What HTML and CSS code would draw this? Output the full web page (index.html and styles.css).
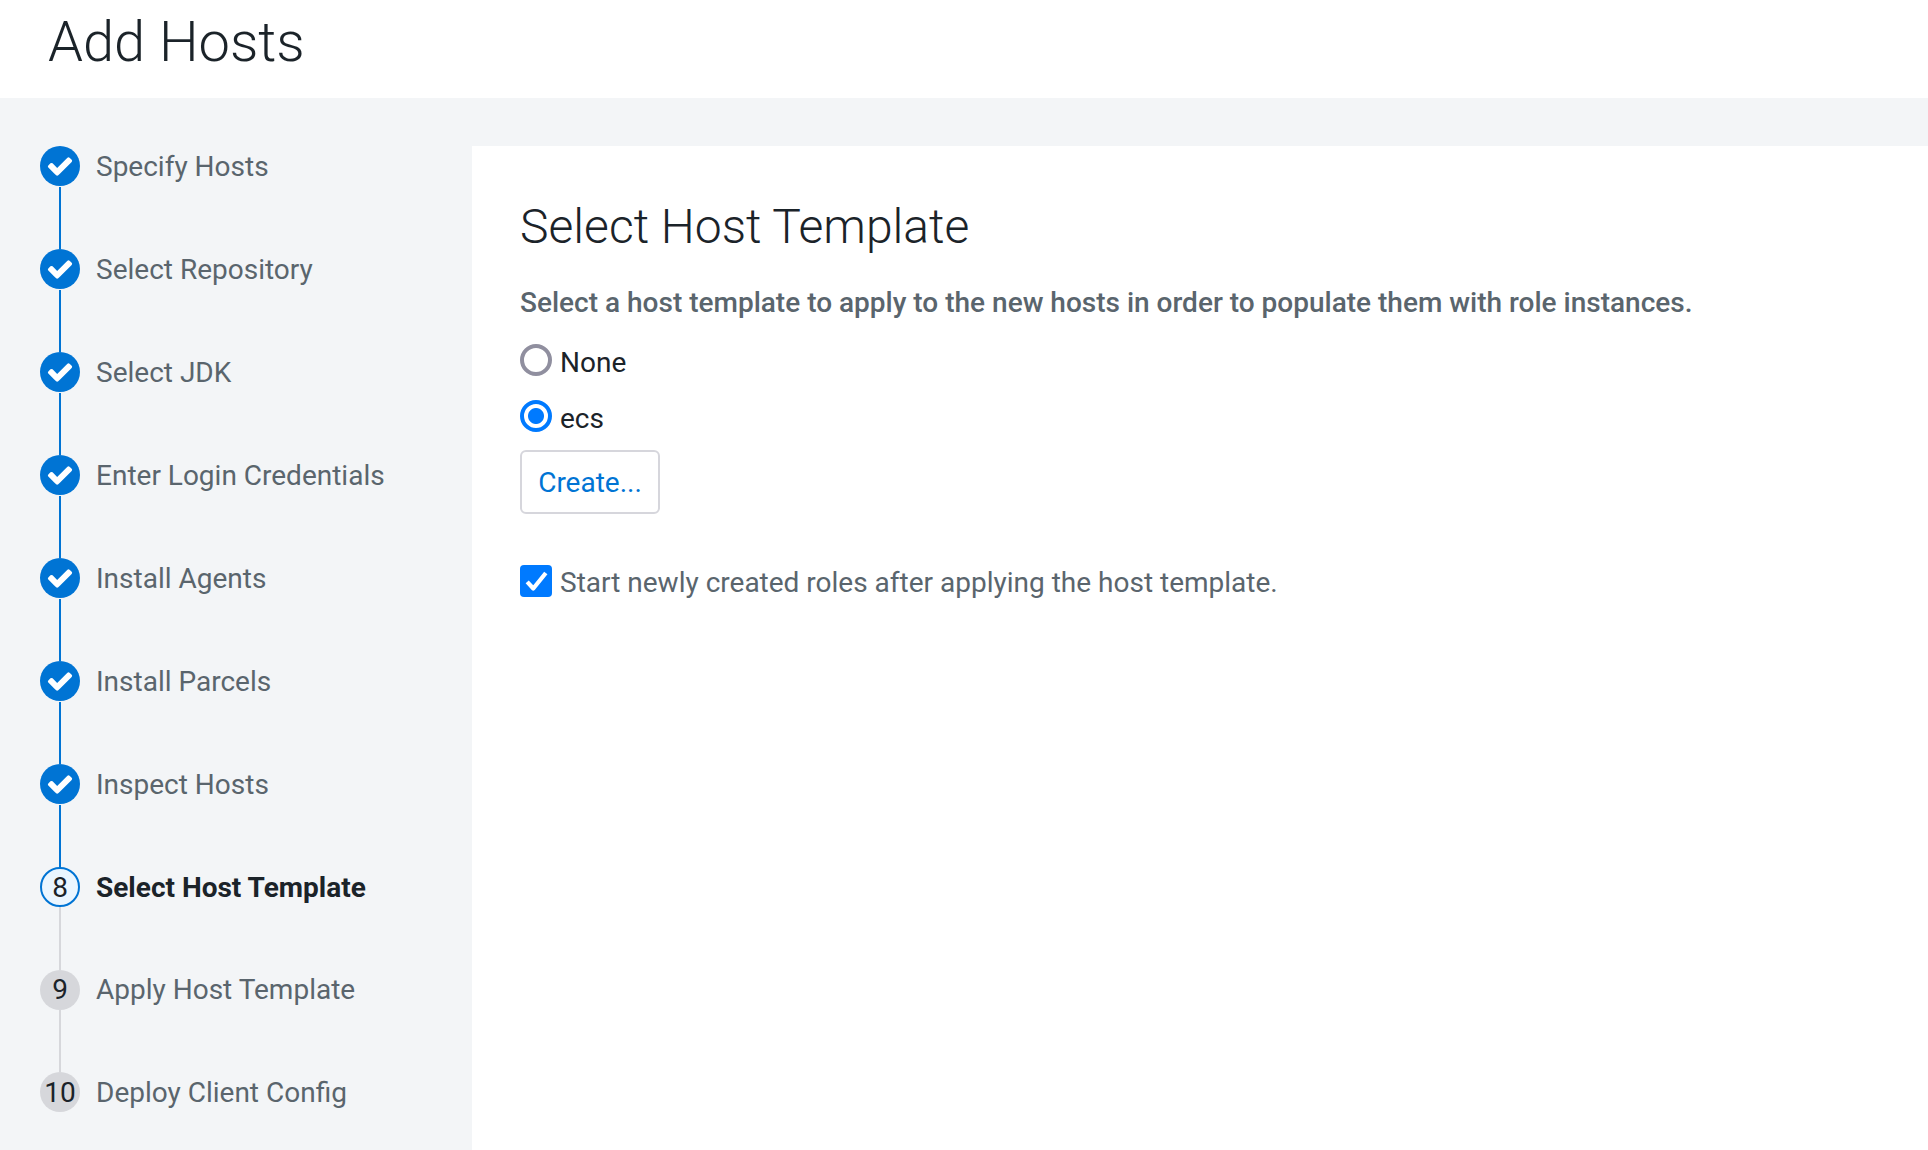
FILE: index.html
```html
<!DOCTYPE html>
<html lang="en">
<head>
<meta charset="utf-8">
<title>Add Hosts</title>
<link rel="stylesheet" href="styles.css">
</head>
<body>
<svg class="sprite" aria-hidden="true">
  <symbol id="check" viewBox="0 0 1792 1792"><path fill="currentColor" d="M1671 566q0 40-28 68l-724 724-136 136q-28 28-68 28t-68-28l-136-136-362-362q-28-28-28-68t28-68l136-136q28-28 68-28t68 28l294 295 656-657q28-28 68-28t68 28l136 136q28 28 28 68z"/></symbol>
</svg>
<header class="header"><h1 class="page-title">Add Hosts</h1></header>
<div class="layout">
  <ol class="steps">
    <li class="step done"><span class="marker"><svg class="tick"><use href="#check"/></svg></span><span class="label">Specify Hosts</span></li>
    <li class="step done"><span class="marker"><svg class="tick"><use href="#check"/></svg></span><span class="label">Select Repository</span></li>
    <li class="step done"><span class="marker"><svg class="tick"><use href="#check"/></svg></span><span class="label">Select JDK</span></li>
    <li class="step done"><span class="marker"><svg class="tick"><use href="#check"/></svg></span><span class="label">Enter Login Credentials</span></li>
    <li class="step done"><span class="marker"><svg class="tick"><use href="#check"/></svg></span><span class="label">Install Agents</span></li>
    <li class="step done"><span class="marker"><svg class="tick"><use href="#check"/></svg></span><span class="label">Install Parcels</span></li>
    <li class="step done"><span class="marker"><svg class="tick"><use href="#check"/></svg></span><span class="label">Inspect Hosts</span></li>
    <li class="step current"><span class="marker">8</span><span class="label">Select Host Template</span></li>
    <li class="step"><span class="marker">9</span><span class="label">Apply Host Template</span></li>
    <li class="step"><span class="marker">10</span><span class="label">Deploy Client Config</span></li>
  </ol>
  <main class="panel">
    <h2 class="panel-title">Select Host Template</h2>
    <p class="lead">Select a host template to apply to the new hosts in order to populate them with role instances.</p>
    <label class="option"><input class="radio" type="radio" name="template"><span class="option-text">None</span></label>
    <label class="option"><input class="radio" type="radio" name="template" checked><span class="option-text">ecs</span></label>
    <button class="button" type="button">Create...</button>
    <div class="start-roles">
      <span class="checkbox" role="checkbox" aria-checked="true"><svg class="checkbox-tick" viewBox="0 0 32 32"><path d="M7.200 16.800l6.100 6.700L25.800 8" fill="none" stroke="currentColor" stroke-width="4.200" stroke-linejoin="round"/></svg></span>
      <span class="option-text">Start newly created roles after applying the host template.</span>
    </div>
  </main>
</div>
</body>
</html>
```
FILE: styles.css
```css
* { box-sizing: border-box; }
body {
  margin: 0;
  height: 1150px;
  overflow: hidden;
  display: flex;
  flex-direction: column;
  background: #fff;
  color: #1b2329;
  font: 28px/40px Roboto, sans-serif;
}
.sprite { display: none; }
.header { height: 98px; padding: 2px 48px 0; flex: none; }
.page-title { margin: 0; font-size: 56px; line-height: 80px; font-weight: 300; }
.layout {
  flex: 1;
  min-height: 0;
  display: flex;
  padding-top: 48px;
  background: #f3f5f7;
}
.steps {
  flex: none;
  width: 472px;
  margin: 0;
  padding: 0 0 0 40px;
  list-style: none;
}
.step {
  position: relative;
  display: flex;
  gap: 16px;
  height: 103px;
  color: #5a656d;
}
.step::after {
  content: "";
  position: absolute;
  left: 19px;
  top: 40px;
  bottom: 0;
  width: 2px;
  background: #d6d7db;
}
.step:last-child::after { display: none; }
.step.done::after { top: 41px; background: #0074d4; }
.marker {
  width: 40px;
  height: 40px;
  padding-top: 2px;
  border-radius: 50%;
  display: flex;
  align-items: center;
  justify-content: center;
  background: #d6d7db;
  color: #1b2329;
}
.label { padding-top: 1px; }
.done .marker { padding-top: 0; background: #0074d4; color: #fff; }
.current .marker { background: #ebf6ff; border: 2px solid #0074d4; }
.current .label { color: #1b2329; font-weight: 700; }
.step:nth-last-child(2) { height: 102px; }
.step:nth-last-child(2) .marker,
.step:nth-last-child(2) .label { padding-top: 0; }
.tick { width: 28px; height: 28px; }
.panel { flex: 1; padding: 51px 48px 0; background: #fff; }
.panel-title { margin: 0; font-size: 48px; line-height: 60px; font-weight: 300; }
.lead { margin: 26px 0 20px; color: #5a656d; font-weight: 500; }
.option { display: flex; gap: 8px; height: 56px; }
.radio {
  appearance: none;
  width: 32px;
  height: 32px;
  margin: 1px 0 0;
  border: 4px solid #908f9f;
  border-radius: 50%;
}
.radio:checked {
  border-color: #007aff;
  background: radial-gradient(circle, #007aff 7.500px, #fff 8.500px);
}
.option-text { line-height: 40px; }
.button {
  display: block;
  height: 64px;
  width: 140px;
  margin-top: -5px;
  padding: 2px 0 0;
  border: 2px solid #d6d6dc;
  border-radius: 6px;
  background: #fff;
  color: #0074d4;
  font: inherit;
}
.start-roles { display: flex; gap: 8px; margin-top: 49px; color: #5a656d; }
.checkbox {
  display: flex;
  width: 32px;
  height: 32px;
  margin-top: 2px;
  border-radius: 4px;
  background: #007aff;
  color: #fff;
}
.checkbox-tick { width: 32px; height: 32px; }
```
